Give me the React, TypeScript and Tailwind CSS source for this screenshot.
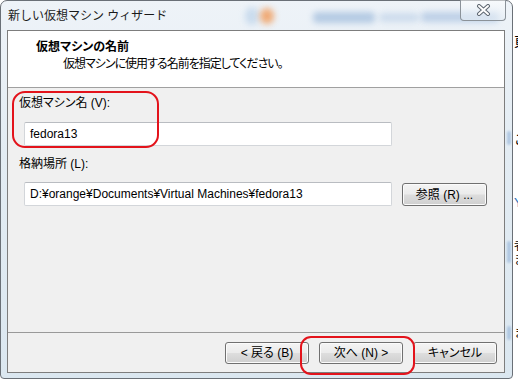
import React from 'react';

// Windows 7 style "new virtual machine" wizard, page 1 (VM name)

const JP = "[font-feature-settings:'palt']";

function AeroButton({ label, className }: { label: string; className: string }) {
  return (
    <button
      type="button"
      className={`flex items-center justify-center rounded-[3px] border border-[#707070] bg-[linear-gradient(180deg,#f4f4f4_0%,#ebebeb_48%,#dddddd_52%,#cfcfcf_100%)] text-[12px] leading-[16px] text-black shadow-[inset_0_0_0_1px_#fbfbfb] ${className}`}
    >
      {label}
    </button>
  );
}

function CloseGlyph() {
  return (
    <svg width="15" height="12" viewBox="0 0 15 12">
      <path d="M3 2 L12 10 M12 2 L3 10" stroke="#5d6670" strokeWidth="4" strokeLinecap="round" />
      <path d="M3 2 L12 10 M12 2 L3 10" stroke="#ffffff" strokeWidth="2" strokeLinecap="round" />
    </svg>
  );
}

export default function App() {
  return (
    <div className="relative h-[381px] w-[518px] overflow-hidden bg-white font-['Liberation_Sans','Noto_Sans_CJK_JP',sans-serif]">
      {/* window frame */}
      <div className="relative flex h-[379px] w-[513px] flex-col rounded-t-[7px] rounded-b-[4px] border border-[#6a7077] bg-[linear-gradient(180deg,#eef3f8_0%,#e3ecf3_40%,#dbe7f0_100%)] pb-[5px] pl-[6px] pr-[7px]">
        {/* blurred glass behind title */}
        <div className="pointer-events-none absolute left-[244px] top-[6px] h-[18px] w-[14px] rounded-full bg-[#bcd3ea] opacity-70 blur-[3px]" />
        <div className="pointer-events-none absolute left-[259px] top-[7px] h-[16px] w-[14px] rounded-full bg-[#f0a46a] opacity-90 blur-[3px]" />
        <div className="pointer-events-none absolute left-[312px] top-[11px] h-[11px] w-[62px] rounded-[4px] bg-[#8fb0d6] opacity-60 blur-[3px]" />
        <div className="pointer-events-none absolute left-[378px] top-[12px] h-[9px] w-[40px] rounded-[4px] bg-[#b8cde6] opacity-60 blur-[3px]" />
        <div className="pointer-events-none absolute left-[420px] top-[11px] h-[10px] w-[78px] rounded-[4px] bg-[#9db9dc] opacity-60 blur-[3px]" />

        {/* title bar */}
        <div className="relative flex h-[29px] items-start justify-between">
          <div className="pl-[1px] pt-[7px] text-[12px] leading-[16px] text-[#1a1a1a]">新しい仮想マシン ウィザード</div>
          <div className="-mr-px -mt-px flex h-[21px] w-[46px] items-center justify-center rounded-b-[4px] border border-t-0 border-[#8b9299] bg-[linear-gradient(180deg,rgba(255,255,255,0.55)_0%,rgba(230,238,245,0.6)_100%)]">
            <CloseGlyph />
          </div>
        </div>

        {/* client area */}
        <div className="relative flex flex-1 flex-col border border-[#7d7d7d] bg-[#f0f0f0]">
          <div className="h-[57px] border-b border-[#a0a0a0] bg-white pt-[8px]">
            <div className={`pl-[28px] text-[12px] font-bold leading-[16px] text-black ${JP}`}>仮想マシンの名前</div>
            <div className={`mt-[1px] pl-[55px] text-[12px] leading-[16px] tracking-[-1px] text-black ${JP}`}>
              仮想マシンに使用する名前を指定してください。
            </div>
          </div>

          <div className="flex flex-1 flex-col pt-[7px]">
            <div className={`ml-[11px] text-[12px] leading-[16px] text-black ${JP}`}>仮想マシン名 (V):</div>
            <div className="ml-[16px] mt-[11px] flex h-[24px] w-[368px] items-center rounded-[2px] border border-[#d3d6da] border-t-[#b9bcc1] bg-white pl-[5px] text-[12px] text-black">
              fedora13
            </div>
            <div className={`ml-[11px] mt-[10px] text-[12px] leading-[16px] text-black ${JP}`}>格納場所 (L):</div>
            <div className="ml-[16px] mt-[10px] flex items-start gap-[10px]">
              <div className="flex h-[24px] w-[368px] items-center rounded-[2px] border border-[#d3d6da] border-t-[#b9bcc1] bg-white pl-[5px] text-[12px] text-black">
                D:¥orange¥Documents¥Virtual Machines¥fedora13
              </div>
              <AeroButton label="参照 (R) ..." className={`mt-[1px] h-[23px] w-[85px] ${JP}`} />
            </div>
          </div>

          <div className="flex h-[40px] justify-end gap-[10px] border-t border-[#999999] pr-[7px] pt-[9px]">
            <AeroButton label="< 戻る (B)" className={`h-[22px] w-[84px] ${JP}`} />
            <AeroButton label="次へ (N) >" className={`h-[22px] w-[84px] ${JP}`} />
            <AeroButton label="キャンセル" className={`h-[22px] w-[84px] ${JP}`} />
          </div>
        </div>

        {/* glass edge glints on right frame */}
        <div className="pointer-events-none absolute left-[506px] top-[130px] h-[14px] w-[4px] rounded-full bg-[#8fb0d6] opacity-60 blur-[1px]" />
        <div className="pointer-events-none absolute left-[506px] top-[240px] h-[22px] w-[4px] rounded-full bg-[#8fb0d6] opacity-60 blur-[1px]" />
        <div className="pointer-events-none absolute left-[506px] top-[325px] h-[14px] w-[4px] rounded-full bg-[#8fb0d6] opacity-60 blur-[1px]" />
      </div>

      {/* desktop text peeking out at the right */}
      <span className="absolute left-[514px] top-[34px] text-[13px] leading-[16px] text-black">頁</span>
      <span className="absolute left-[514px] top-[132px] text-[13px] leading-[16px] text-black">こ</span>
      <span className="absolute left-[514px] top-[195px] text-[13px] leading-[16px] text-[#2a6fb8]">Y</span>
      <span className="absolute left-[514px] top-[240px] text-[12px] leading-[13px] text-black">者</span>
      <span className="absolute left-[514px] top-[254px] text-[12px] leading-[13px] text-black">ま</span>
      <span className="absolute left-[514px] top-[326px] text-[13px] leading-[14px] text-black">ま</span>

      {/* red highlight marks */}
      <div className="pointer-events-none absolute left-[12px] top-[91px] h-[57px] w-[147px] rounded-[13px] border-2 border-[#e3131b]" />
      <div className="pointer-events-none absolute left-[300px] top-[336px] h-[39px] w-[115px] rounded-[11px] border-2 border-[#e3131b]" />
    </div>
  );
}
